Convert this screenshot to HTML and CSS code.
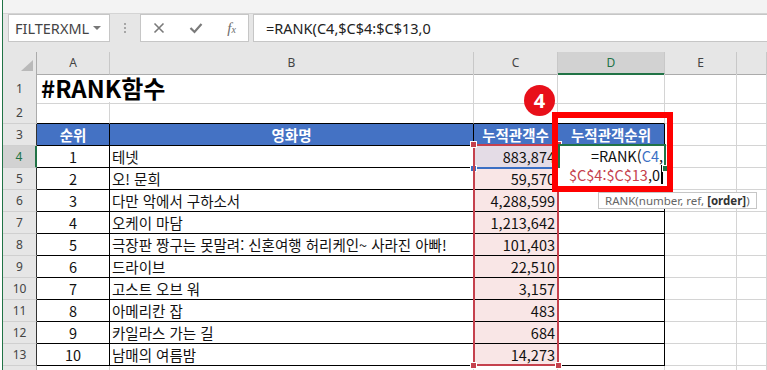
FILE: index.html
```html
<!DOCTYPE html>
<html lang="ko">
<head>
    <meta charset="UTF-8">
    <meta name="viewport" content="width=device-width, initial-scale=1.0">
    <title>RANK 함수</title>
    <link rel="stylesheet" href="styles.css">
</head>
<body>

<div class="app">
    <div class="ribbon-edge"></div>

    <!-- 수식 입력줄 -->
    <div class="formula-bar">
        <div class="name-box"><span>FILTERXML</span><span class="caret"></span></div>
        <div class="grip"><i></i><i></i><i></i></div>
        <div class="fx-buttons">
            <svg width="12" height="12" viewBox="0 0 12 12"><path d="M1.5 1.5 L10.5 10.5 M10.5 1.5 L1.5 10.5" stroke="#7a7a7a" stroke-width="1.6" fill="none"/></svg>
            <svg width="14" height="12" viewBox="0 0 14 12"><path d="M1.5 6 L5.5 10 L12.5 2" stroke="#7a7a7a" stroke-width="2.2" fill="none"/></svg>
            <span class="fx">f<sub>x</sub></span>
        </div>
        <div class="formula-input">=RANK(C4,$C$4:$C$13,0</div>
    </div>

    <!-- 시트 -->
    <div class="sheet">
        <div class="row heads">
            <div class="corner"></div>
            <div class="ch">A</div>
            <div class="ch">B</div>
            <div class="ch">C</div>
            <div class="ch active">D</div>
            <div class="ch">E</div>
            <div class="ch"></div>
        </div>

        <div class="row tall">
            <div class="rh">1</div>
            <div class="c title">#RANK함수</div>
            <div class="c"></div><div class="c"></div><div class="c"></div><div class="c"></div><div class="c"></div>
        </div>

        <div class="row">
            <div class="rh">2</div>
            <div class="c tb"></div><div class="c tb"></div><div class="c tb"></div><div class="c tb"></div><div class="c"></div><div class="c"></div>
        </div>

        <div class="row">
            <div class="rh tl">3</div>
            <div class="c t hd">순위</div>
            <div class="c t hd">영화명</div>
            <div class="c t hd">누적관객수</div>
            <div class="c t hd">누적관객순위</div>
            <div class="c"></div><div class="c"></div>
        </div>

        <div class="row">
            <div class="rh tl active">4</div>
            <div class="c t ctr">1</div>
            <div class="c t">테넷</div>
            <div class="c t num cur">883,874</div>
            <div class="c t"></div>
            <div class="c"></div><div class="c"></div>
        </div>
        <div class="row">
            <div class="rh tl">5</div>
            <div class="c t ctr">2</div>
            <div class="c t">오! 문희</div>
            <div class="c t num pink">59,570</div>
            <div class="c t"></div>
            <div class="c"></div><div class="c"></div>
        </div>
        <div class="row">
            <div class="rh tl">6</div>
            <div class="c t ctr">3</div>
            <div class="c t">다만 악에서 구하소서</div>
            <div class="c t num pink">4,288,599</div>
            <div class="c t"></div>
            <div class="c"></div><div class="c"></div>
        </div>
        <div class="row">
            <div class="rh tl">7</div>
            <div class="c t ctr">4</div>
            <div class="c t">오케이 마담</div>
            <div class="c t num pink">1,213,642</div>
            <div class="c t"></div>
            <div class="c"></div><div class="c"></div>
        </div>
        <div class="row">
            <div class="rh tl">8</div>
            <div class="c t ctr">5</div>
            <div class="c t">극장판 짱구는 못말려: 신혼여행 허리케인~ 사라진 아빠!</div>
            <div class="c t num pink">101,403</div>
            <div class="c t"></div>
            <div class="c"></div><div class="c"></div>
        </div>
        <div class="row">
            <div class="rh tl">9</div>
            <div class="c t ctr">6</div>
            <div class="c t">드라이브</div>
            <div class="c t num pink">22,510</div>
            <div class="c t"></div>
            <div class="c"></div><div class="c"></div>
        </div>
        <div class="row">
            <div class="rh tl">10</div>
            <div class="c t ctr">7</div>
            <div class="c t">고스트 오브 워</div>
            <div class="c t num pink">3,157</div>
            <div class="c t"></div>
            <div class="c"></div><div class="c"></div>
        </div>
        <div class="row">
            <div class="rh tl">11</div>
            <div class="c t ctr">8</div>
            <div class="c t">아메리칸 잡</div>
            <div class="c t num pink">483</div>
            <div class="c t"></div>
            <div class="c"></div><div class="c"></div>
        </div>
        <div class="row">
            <div class="rh tl">12</div>
            <div class="c t ctr">9</div>
            <div class="c t">카일라스 가는 길</div>
            <div class="c t num pink">684</div>
            <div class="c t"></div>
            <div class="c"></div><div class="c"></div>
        </div>
        <div class="row">
            <div class="rh tl">13</div>
            <div class="c t ctr">10</div>
            <div class="c t">남매의 여름밤</div>
            <div class="c t num pink">14,273</div>
            <div class="c t"></div>
            <div class="c"></div><div class="c"></div>
        </div>
        <div class="row">
            <div class="rh"></div>
            <div class="c"></div><div class="c"></div><div class="c"></div><div class="c"></div><div class="c"></div><div class="c"></div>
        </div>
    </div>
</div>

<!-- 참조 범위 표시 -->
<div class="ref ref-blue"><span class="h bl"></span></div>
<div class="ref ref-red"><span class="h tl"></span><span class="h tr"></span><span class="h bl"></span><span class="h br"></span></div>

<!-- 편집 중인 셀 D4 -->
<div class="edit">=RANK(<span class="blue">C4</span>,<br><span class="red">$C$4:$C$13</span>,0<span class="caret-line"></span></div>

<div class="tip">RANK(number, ref, <b>[order]</b>)</div>

<!-- 강조 표시 -->
<div class="mark"></div>
<div class="badge">4</div>

</body>
</html>
```

FILE: styles.css
```css
body {
    margin: 0;
    position: relative;
    width: 767px;
    height: 370px;
    overflow: hidden;
    background: #fff;
    font-family: "Noto Sans CJK KR", sans-serif;
}
.app {
    margin-left: 2px;
    border-left: 1px solid #217346;
}
.ribbon-edge {
    height: 13px;
    background: #f3f3f3;
    border-bottom: 1px solid #d4d4d4;
}

/* 수식 입력줄 */
.formula-bar {
    height: 38px;
    background: #e6e6e6;
    display: flex;
    align-items: flex-start;
    font-family: "Noto Sans", sans-serif;
}
.name-box {
    margin-left: 5px;
    width: 102px;
    height: 28px;
    box-sizing: border-box;
    border: 1px solid #c6c6c6;
    background: #fff;
    display: flex;
    align-items: center;
    padding-left: 6px;
    font-size: 14.5px;
    color: #444;
}
.caret {
    margin-left: auto;
    margin-right: 8px;
    border-left: 4px solid transparent;
    border-right: 4px solid transparent;
    border-top: 4px solid #777;
}
.grip {
    margin: 9px 14px 0;
    width: 2px;
    display: flex;
    flex-direction: column;
    gap: 2px;
}
.grip i {
    display: block;
    width: 2px;
    height: 2px;
    background: #a6a6a6;
}
.fx-buttons {
    width: 109px;
    height: 28px;
    box-sizing: border-box;
    border: 1px solid #c6c6c6;
    background: #fff;
    display: flex;
    align-items: center;
    justify-content: space-around;
}
.fx {
    font-family: "Liberation Serif", serif;
    font-style: italic;
    font-size: 15px;
    color: #6d6d6d;
}
.fx sub {
    font-size: 10px;
    vertical-align: 0;
}
.formula-input {
    margin-left: 4px;
    flex: 1;
    height: 28px;
    box-sizing: border-box;
    border: 1px solid #c6c6c6;
    border-right: 0;
    background: #fff;
    padding-left: 12px;
    font-size: 14.5px;
    line-height: 26px;
    color: #222;
}

/* 시트 */
.row {
    display: grid;
    grid-template-columns: 34px 73px 364px 84px 107px 72px 1fr;
    height: 22px;
}
.row.tall {
    height: 28px;
}
.row > div {
    box-sizing: border-box;
    white-space: nowrap;
}
.corner {
    background: #e6e6e6;
    border-right: 1px solid #ababab;
    border-bottom: 1px solid #ababab;
    display: flex;
    align-items: flex-end;
    justify-content: flex-end;
    padding: 0 3px 3px 0;
}
.corner::after {
    content: "";
    border-left: 12px solid transparent;
    border-bottom: 11px solid #b9b9b9;
}
.ch {
    background: #e6e6e6;
    border-right: 1px solid #c8c8c8;
    border-bottom: 1px solid #ababab;
    text-align: center;
    font-family: "Noto Sans", sans-serif;
    font-size: 12px;
    line-height: 21px;
    color: #444;
}
.ch.active {
    background: #d2d2d2;
    color: #217346;
    border-bottom: 2px solid #217346;
}
.rh {
    background: #e6e6e6;
    border-right: 1px solid #ababab;
    border-bottom: 1px solid #d0d0d0;
    text-align: center;
    font-family: "Noto Sans", sans-serif;
    font-size: 12px;
    line-height: 21px;
    color: #444;
}
.tall .rh {
    line-height: 29px;
}
.rh.tl {
    border-right-color: #333;
}
.rh.active {
    background: #d2d2d2;
    color: #217346;
    border-right: 2px solid #217346;
}
.c {
    border-right: 1px solid #d4d4d4;
    border-bottom: 1px solid #d4d4d4;
    padding: 0 2px;
    font-size: 14.5px;
    line-height: 21px;
    color: #111;
}
.c.title {
    border-right-color: transparent;
    padding-left: 4px;
    font-size: 24px;
    font-weight: bold;
    line-height: 27px;
    color: #000;
}
.c.tb {
    border-bottom-color: #000;
}
.c.t {
    border-right-color: #000;
    border-bottom-color: #000;
}
.c.hd {
    background: #4472c4;
    color: #fff;
    font-weight: bold;
    text-align: center;
}
.c.ctr {
    text-align: center;
}
.c.num {
    text-align: right;
}
.c.pink {
    background: #f9e6e6;
}
.c.cur {
    background: #e4dce6;
}

/* 참조 범위 */
.ref {
    position: absolute;
    left: 473px;
    top: 144px;
    width: 86px;
    box-sizing: border-box;
    border: 2px solid;
}
.ref-blue {
    height: 25px;
    border-color: #3a6fc4;
}
.ref-red {
    height: 222px;
    border-color: #c5414d;
}
.h {
    position: absolute;
    width: 5px;
    height: 5px;
    border: 1px solid #fff;
    background: #c5414d;
}
.ref-blue .h {
    background: #3a6fc4;
}
.h.tl { left: -5px; top: -5px; }
.h.tr { right: -5px; top: -5px; }
.h.bl { left: -5px; bottom: -5px; }
.h.br { right: -5px; bottom: -5px; }

/* 편집 셀 */
.edit {
    position: absolute;
    left: 558px;
    top: 144px;
    width: 108px;
    height: 47px;
    box-sizing: border-box;
    background: #fff;
    padding: 2px 3px 0 0;
    text-align: right;
    font-size: 14.5px;
    line-height: 19px;
    color: #111;
    white-space: nowrap;
}
.edit::before {
    content: "";
    position: absolute;
    left: 0;
    top: 0;
    width: 108px;
    height: 24px;
    box-sizing: border-box;
    border: 2px solid #217346;
    border-bottom: 0;
}
.edit::after {
    content: "";
    position: absolute;
    left: 104px;
    top: 21px;
    width: 5px;
    height: 5px;
    background: #217346;
    border: 1px solid #fff;
}
.edit .blue {
    color: #3a6fc4;
}
.edit .red {
    color: #c5414d;
}
.caret-line {
    display: inline-block;
    width: 2px;
    height: 19px;
    margin-left: 1px;
    background: #000;
    vertical-align: top;
}

.tip {
    position: absolute;
    left: 598px;
    top: 192px;
    width: 159px;
    height: 17px;
    box-sizing: border-box;
    border: 1px solid #c6c6c6;
    background: #fff;
    padding-left: 6px;
    font-family: "Noto Sans", sans-serif;
    font-size: 11.5px;
    line-height: 15px;
    color: #666;
    white-space: nowrap;
}
.tip b {
    color: #333;
}

/* 강조 표시 */
.mark {
    position: absolute;
    left: 552px;
    top: 112px;
    width: 121px;
    height: 80px;
    box-sizing: border-box;
    border: 6px solid #ff0000;
}
.badge {
    position: absolute;
    left: 524px;
    top: 85px;
    width: 31px;
    height: 31px;
    border-radius: 50%;
    background: #e8101a;
    color: #fff;
    font-family: "Noto Sans", sans-serif;
    font-weight: bold;
    font-size: 20px;
    line-height: 31px;
    text-align: center;
}
```
